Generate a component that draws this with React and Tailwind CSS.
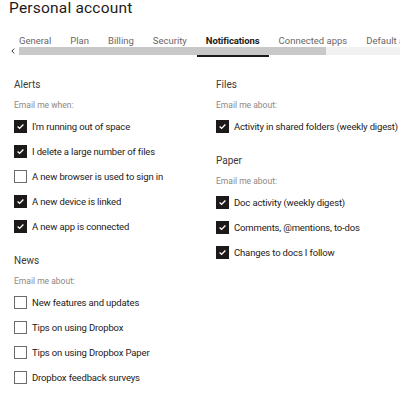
import React from "react";

const font = { fontFamily: "Roboto, 'Liberation Sans', Arial, sans-serif" };

function Check({ checked }) {
  return checked ? (
    <div className="w-[13px] h-[13px] bg-[#1e1919] flex items-center justify-center shrink-0">
      <svg width="9" height="9" viewBox="0 0 9 9">
        <path d="M1.6 4.6 L3.6 6.4 L7.4 2.6" stroke="white" strokeWidth="1.4" fill="none" />
      </svg>
    </div>
  ) : (
    <div className="w-[13px] h-[13px] border border-[#6f6a6a] bg-white shrink-0" />
  );
}

function Row({ checked, label }) {
  return (
    <div className="h-[25px] flex items-center gap-[5px]">
      <Check checked={checked} />
      <span className="text-[9.5px] tracking-[-0.15px] text-[#1e1919] leading-none whitespace-nowrap">{label}</span>
    </div>
  );
}

function Section({ title, sub, items }) {
  return (
    <div>
      <div className="h-[25px] flex items-center text-[10px] text-[#3d3838] leading-none">{title}</div>
      <div className="h-[17px] flex items-center text-[8.5px] text-[#8c8888] leading-none">{sub}</div>
      {items.map(([c, l]) => (
        <Row key={l} checked={c} label={l} />
      ))}
    </div>
  );
}

const tabs = ["General", "Plan", "Billing", "Security", "Notifications", "Connected apps", "Default apps"];

export default function App() {
  return (
    <div className="w-[400px] h-[394px] bg-white overflow-hidden" style={font}>
      <div className="h-[17px] flex items-center pl-[9px] text-[15.5px] text-[#1e1919] leading-none tracking-[0.2px]">
        Personal account
      </div>
      <div className="flex pl-[9.5px] pt-[17px] h-[30px] whitespace-nowrap">
        {tabs.map((t) => (
          <div
            key={t}
            className={
              "px-[9.5px] h-[13px] flex items-center text-[9.5px] leading-none " +
              (t === "Notifications" ? "font-bold text-[#1e1919] tracking-[-0.1px]" : "text-[#6b6666]")
            }
          >
            {t}
          </div>
        ))}
      </div>
      <div className="flex h-[8px] items-center">
        <div className="w-[19px] h-[8px] flex items-center justify-end pr-[4px]">
          <svg width="4" height="6" viewBox="0 0 4 6">
            <path d="M3.2 0.6 L0.9 3 L3.2 5.4" stroke="#333" strokeWidth="1" fill="none" />
          </svg>
        </div>
        <div className="w-[307px] h-[8px] bg-[#c8c8c8]" />
        <div className="flex-1 h-[8px] bg-[#f1f1f1]" />
      </div>
      <div className="h-[2px] ml-[197px] w-[72px] bg-[#1e1919]" />
      <div className="grid grid-cols-[202px_1fr] pl-[14px] pt-[15px]">
        <div className="flex flex-col gap-[9px]">
          <Section
            title="Alerts"
            sub="Email me when:"
            items={[
              [true, "I'm running out of space"],
              [true, "I delete a large number of files"],
              [false, "A new browser is used to sign in"],
              [true, "A new device is linked"],
              [true, "A new app is connected"],
            ]}
          />
          <Section
            title="News"
            sub="Email me about:"
            items={[
              [false, "New features and updates"],
              [false, "Tips on using Dropbox"],
              [false, "Tips on using Dropbox Paper"],
              [false, "Dropbox feedback surveys"],
            ]}
          />
        </div>
        <div className="flex flex-col gap-[9px]">
          <Section
            title="Files"
            sub="Email me about:"
            items={[[true, "Activity in shared folders (weekly digest)"]]}
          />
          <Section
            title="Paper"
            sub="Email me about:"
            items={[
              [true, "Doc activity (weekly digest)"],
              [true, "Comments, @mentions, to-dos"],
              [true, "Changes to docs I follow"],
            ]}
          />
        </div>
      </div>
    </div>
  );
}
